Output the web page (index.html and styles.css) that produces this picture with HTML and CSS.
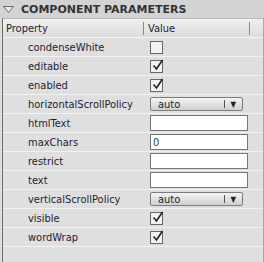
FILE: index.html
```html
<!DOCTYPE html>
<html>
<head>
<meta charset="utf-8">
<link rel="stylesheet" href="styles.css">
</head>
<body>
<div class="panel">
  <div class="title">
    <svg class="tri" width="11" height="7" viewBox="0 0 11 7"><path d="M0.5 0.5 H10.5 L5.5 6.5 Z" fill="#e8e8e8" stroke="#707070" stroke-width="1"/></svg>
    <span>COMPONENT PARAMETERS</span>
  </div>
  <div class="table">
    <div class="head">
      <div class="hcell">Property</div>
      <div class="hcell hval">Value</div>
    </div>
    <div class="row"><div class="name">condenseWhite</div><div class="val"><span class="cb"></span></div></div>
    <div class="row"><div class="name">editable</div><div class="val"><span class="cb"><svg width="13" height="13" viewBox="0 0 13 13"><path d="M2.5 6.5 L5.5 10 L11.5 1" fill="none" stroke="#222" stroke-width="1.6"/></svg></span></div></div>
    <div class="row"><div class="name">enabled</div><div class="val"><span class="cb"><svg width="13" height="13" viewBox="0 0 13 13"><path d="M2.5 6.5 L5.5 10 L11.5 1" fill="none" stroke="#222" stroke-width="1.6"/></svg></span></div></div>
    <div class="row"><div class="name">horizontalScrollPolicy</div><div class="val"><span class="dd"><span class="ddtext">auto</span><span class="ddsep"></span><span class="ddarrow">▼</span></span></div></div>
    <div class="row"><div class="name">htmlText</div><div class="val"><span class="inp"></span></div></div>
    <div class="row"><div class="name">maxChars</div><div class="val"><span class="inp">0</span></div></div>
    <div class="row"><div class="name">restrict</div><div class="val"><span class="inp"></span></div></div>
    <div class="row"><div class="name">text</div><div class="val"><span class="inp"></span></div></div>
    <div class="row"><div class="name">verticalScrollPolicy</div><div class="val"><span class="dd"><span class="ddtext">auto</span><span class="ddsep"></span><span class="ddarrow">▼</span></span></div></div>
    <div class="row"><div class="name">visible</div><div class="val"><span class="cb"><svg width="13" height="13" viewBox="0 0 13 13"><path d="M2.5 6.5 L5.5 10 L11.5 1" fill="none" stroke="#222" stroke-width="1.6"/></svg></span></div></div>
    <div class="row"><div class="name">wordWrap</div><div class="val"><span class="cb"><svg width="13" height="13" viewBox="0 0 13 13"><path d="M2.5 6.5 L5.5 10 L11.5 1" fill="none" stroke="#222" stroke-width="1.6"/></svg></span></div></div>
  </div>
</div>
</body>
</html>
```
FILE: styles.css
```css
html, body { margin: 0; padding: 0; }
body { background: #dcdcdc; }
.panel {
  width: 264px; height: 262px; overflow: hidden;
  background: #dedede;
  font-family: "DejaVu Sans Condensed", "DejaVu Sans", sans-serif;
  font-size: 11px; color: #1f2233;
}
.title {
  height: 18px; background: #d3d3d3;
  display: flex; align-items: center; gap: 7px; padding-left: 3px;
  font-family: "DejaVu Sans", sans-serif;
  font-weight: bold; color: #333; font-size: 11px;
}
.tri { display: block; }
.table {
  margin-left: 2px; width: 260px; height: 244px;
  border-left: 1px solid #6e6e6e; border-right: 1px solid #a8a8a8;
  background: #dfdfdf;
}
.head {
  height: 18px; display: grid; grid-template-columns: 140px 1fr;
  background: linear-gradient(#f0f0f0, #dcdcdc);
  border-top: 1px solid #bdbdbd; border-bottom: 1px solid #f4f4f4;
}
.hcell { display: flex; align-items: center; padding-left: 3px; }
.hval { padding-left: 4px; border-left: 1px solid #8a8a8a; margin: 3px 13px 3px 0; border-right: 1px solid #8a8a8a; }
.row {
  height: 18px; display: grid; grid-template-columns: 141px 1fr;
  border-bottom: 1px solid #f2f2f2;
}
.name { display: flex; align-items: center; padding-left: 25px; white-space: nowrap; overflow: hidden; }
.val { display: flex; align-items: center; padding-left: 6px; }
.cb {
  width: 11px; height: 11px; border: 1px solid #666; background: #f3f3f3;
  position: relative;
}
.cb svg { position: absolute; left: 0; top: -2px; }
.dd {
  width: 91px; height: 12px; border: 1px solid #7c7c7c; border-radius: 2px;
  background: linear-gradient(#f4f4f4, #cfcfcf);
  display: flex; align-items: center; font-size: 11px;
}
.ddtext { padding-left: 7px; flex: 1; }
.ddsep { width: 1px; height: 8px; background: #555; margin-right: 5px; }
.ddarrow { font-size: 8px; margin-right: 6px; color: #222; }
.inp {
  width: 94px; height: 14px; border: 1px solid #777; background: #fff;
  display: flex; align-items: center; padding-left: 2px; color: #2b3b73;
}
```
